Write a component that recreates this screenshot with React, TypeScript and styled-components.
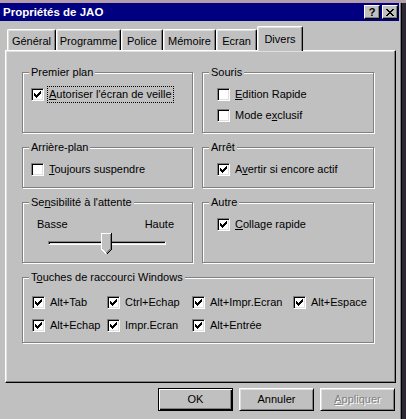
import React from "react";
import styled, { createGlobalStyle } from "styled-components";

const Global = createGlobalStyle`
  html, body { margin: 0; padding: 0; }
  body {
    width: 406px;
    height: 419px;
    overflow: hidden;
    background: linear-gradient(#b49ea9 0, #b49ea9 3px, #2e2535 3px);
    font-family: "Liberation Sans", Arial, sans-serif;
    font-size: 11px;
    color: #000;
  }
`;

const Window = styled.div`
  margin-top: 3px;
  width: 402px;
  height: 420px;
  box-sizing: border-box;
  background: #c0c0c0;
  border-right: 1px solid #000;
  box-shadow: inset -1px 0 #808080;
  padding-right: 2px;
  display: flex;
  flex-direction: column;
`;

const TitleBar = styled.div`
  height: 18px;
  background: #000080;
  color: #fff;
  display: flex;
  align-items: center;
  padding: 0 1px 0 3px;
  gap: 2px;
`;

const TitleText = styled.div`
  flex: 1;
  font-weight: bold;
  font-size: 11.5px;
  line-height: 14px;
`;

const CaptionButton = styled.div`
  width: 16px;
  height: 14px;
  box-sizing: border-box;
  background: #c0c0c0;
  border-top: 1px solid #fff;
  border-left: 1px solid #fff;
  border-right: 1px solid #000;
  border-bottom: 1px solid #000;
  box-shadow: inset -1px -1px #808080;
  display: flex;
  align-items: center;
  justify-content: center;
  color: #000;
  font-weight: bold;
  font-size: 11px;
  line-height: 11px;
`;

const Body = styled.div`
  padding: 5px 3px 0 5px;
  display: flex;
  flex-direction: column;
`;

const TabStrip = styled.div`
  height: 24px;
  display: flex;
  align-items: flex-end;
  padding-left: 2px;
`;

const Tab = styled.div<{ $w: number; $active?: boolean }>`
  box-sizing: border-box;
  width: ${(p) => p.$w}px;
  height: ${(p) => (p.$active ? 25 : 21)}px;
  margin-bottom: ${(p) => (p.$active ? -1 : 0)}px;
  position: relative;
  z-index: ${(p) => (p.$active ? 2 : 0)};
  background: #c0c0c0;
  border-top: 1px solid #fff;
  border-left: 1px solid #fff;
  border-right: 1px solid #000;
  border-radius: 2px 2px 0 0;
  box-shadow: inset -1px 0 #808080, inset 1px 1px #dfdfdf;
  text-align: center;
  padding-top: ${(p) => (p.$active ? 6 : 5)}px;
  line-height: 13px;
`;

const Panel = styled.div`
  position: relative;
  z-index: 1;
  box-sizing: border-box;
  height: 333px;
  border-top: 1px solid #fff;
  border-left: 1px solid #fff;
  border-right: 1px solid #000;
  border-bottom: 1px solid #000;
  box-shadow: inset -1px -1px #808080, inset 1px 1px #dfdfdf;
  padding: 21px 21px 0 16px;
  display: grid;
  grid-template-columns: 171px 172px;
  column-gap: 9px;
  row-gap: 14px;
  align-content: start;
`;

const GroupBox = styled.div<{ $h: number; $indent: number; $span?: boolean }>`
  position: relative;
  box-sizing: border-box;
  height: ${(p) => p.$h}px;
  grid-column: ${(p) => (p.$span ? "1 / span 2" : "auto")};
  border: 1px solid #808080;
  box-shadow: inset 1px 1px #fff, 1px 1px #fff;
  padding: 11px 0 0 ${(p) => p.$indent}px;
  display: flex;
  flex-direction: column;
`;

const GroupTitle = styled.div`
  position: absolute;
  top: -7px;
  left: 6px;
  padding: 0 2px;
  background: #c0c0c0;
  line-height: 13px;
  white-space: nowrap;
`;

const CheckRow = styled.div`
  height: 21px;
  display: flex;
  align-items: center;
  gap: 3px;
  white-space: nowrap;
`;

const Box = styled.span`
  width: 13px;
  height: 13px;
  box-sizing: border-box;
  flex: none;
  background: #fff;
  border-top: 1px solid #808080;
  border-left: 1px solid #808080;
  border-right: 1px solid #fff;
  border-bottom: 1px solid #fff;
  box-shadow: inset 1px 1px #000, inset -1px -1px #dfdfdf;
  display: flex;
  align-items: center;
  justify-content: center;
`;

const Label = styled.span<{ $focus?: boolean }>`
  padding: 1px 1px;
  line-height: 13px;
  border: 1px dotted ${(p) => (p.$focus ? "#000" : "transparent")};
`;

const TouchGrid = styled.div`
  margin-top: 2px;
  display: grid;
  grid-template-columns: 75px 85px 101px auto;
  grid-auto-rows: 23px;
  align-items: center;
`;

const SliderLabels = styled.div`
  display: flex;
  justify-content: space-between;
  line-height: 13px;
  padding: 4px 18px 0 0;
`;

const Slider = styled.div`
  position: relative;
  width: 118px;
  height: 22px;
  margin: 2px 0 0 11px;
`;

const Track = styled.div`
  position: absolute;
  left: 0;
  right: 0;
  top: 8px;
  height: 4px;
  box-sizing: border-box;
  border-top: 1px solid #808080;
  border-left: 1px solid #808080;
  border-right: 1px solid #fff;
  border-bottom: 1px solid #fff;
  background: #dfdfdf;
  box-shadow: inset 1px 1px #000;
`;

const Thumb = styled.div`
  position: absolute;
  top: 0;
  width: 11px;
  height: 22px;
`;

const ButtonRow = styled.div`
  margin-top: 5px;
  display: flex;
  justify-content: flex-end;
  gap: 6px;
  padding-right: 1px;
`;

const Button = styled.div<{ $default?: boolean; $disabled?: boolean }>`
  width: 75px;
  height: 23px;
  box-sizing: border-box;
  background: #c0c0c0;
  display: flex;
  align-items: center;
  justify-content: center;
  line-height: 13px;
  border-style: solid;
  border-width: 1px;
  border-color: ${(p) => (p.$default ? "#000" : "#fff #000 #000 #fff")};
  box-shadow: ${(p) =>
    p.$default
      ? "inset 1px 1px #fff, inset -1px -1px #000, inset -2px -2px #808080"
      : "inset 1px 1px #dfdfdf, inset -1px -1px #808080"};
  color: ${(p) => (p.$disabled ? "#808080" : "#000")};
  text-shadow: ${(p) => (p.$disabled ? "1px 1px 0 #fff" : "none")};
`;

const CHECK = [
  "......#",
  ".....##",
  "#...###",
  "##.###.",
  "#####..",
  ".###...",
  "..#....",
];

const CLOSE = [
  "##....##",
  ".##..##.",
  "..####..",
  "...##...",
  "..####..",
  ".##..##.",
  "##....##",
];

const PixelGlyph: React.FC<{ rows: string[] }> = ({ rows }) => (
  <svg width={rows[0].length} height={rows.length} shapeRendering="crispEdges">
    {rows.map((r, y) =>
      r.split("").map((c, x) =>
        c === "#" ? <rect key={`${x}-${y}`} x={x} y={y} width={1} height={1} fill="#000" /> : null
      )
    )}
  </svg>
);

const Checkbox: React.FC<{ checked?: boolean; focus?: boolean; children: React.ReactNode }> = ({
  checked,
  focus,
  children,
}) => (
  <CheckRow>
    <Box>{checked && <PixelGlyph rows={CHECK} />}</Box>
    <Label $focus={focus}>{children}</Label>
  </CheckRow>
);

const ThumbShape = () => (
  <svg width="11" height="22" shapeRendering="crispEdges">
    <polygon points="0,0 11,0 11,16 5.5,21.5 0,16" fill="#c0c0c0" />
    <polyline points="0.5,16 0.5,0.5 10,0.5" fill="none" stroke="#fff" />
    <polyline points="0.5,16 5,20.5" fill="none" stroke="#fff" />
    <polyline points="10.5,0 10.5,16.5 5.5,21.5" fill="none" stroke="#000" />
    <polyline points="9.5,1 9.5,16 5.5,20" fill="none" stroke="#808080" />
  </svg>
);

const tabs = [
  { label: "Général", w: 49 },
  { label: "Programme", w: 65 },
  { label: "Police", w: 42 },
  { label: "Mémoire", w: 53 },
  { label: "Ecran", w: 41 },
  { label: "Divers", w: 46, active: true },
];

const sliderValue = 5;
const sliderMax = 10;

export default function App() {
  const thumbLeft = Math.floor((sliderValue / sliderMax) * (118 - 11));
  return (
    <>
      <Global />
      <Window>
        <TitleBar>
          <TitleText>Propriétés de JAO</TitleText>
          <CaptionButton>?</CaptionButton>
          <CaptionButton>
            <PixelGlyph rows={CLOSE} />
          </CaptionButton>
        </TitleBar>
        <Body>
          <TabStrip>
            {tabs.map((t) => (
              <Tab key={t.label} $w={t.w} $active={t.active}>
                {t.label}
              </Tab>
            ))}
          </TabStrip>
          <Panel>
            <GroupBox $h={61} $indent={8}>
              <GroupTitle>Premier plan</GroupTitle>
              <Checkbox checked focus>
                <u>A</u>utoriser l'écran de veille
              </Checkbox>
            </GroupBox>
            <GroupBox $h={61} $indent={14}>
              <GroupTitle>Souris</GroupTitle>
              <Checkbox>
                <u>E</u>dition Rapide
              </Checkbox>
              <Checkbox>
                Mode e<u>x</u>clusif
              </Checkbox>
            </GroupBox>
            <GroupBox $h={41} $indent={8}>
              <GroupTitle>Arrière-plan</GroupTitle>
              <Checkbox>
                <u>T</u>oujours suspendre
              </Checkbox>
            </GroupBox>
            <GroupBox $h={41} $indent={14}>
              <GroupTitle>Arrêt</GroupTitle>
              <Checkbox checked>
                A<u>v</u>ertir si encore actif
              </Checkbox>
            </GroupBox>
            <GroupBox $h={61} $indent={14}>
              <GroupTitle>
                Se<u>n</u>sibilité à l'attente
              </GroupTitle>
              <SliderLabels>
                <span>Basse</span>
                <span>Haute</span>
              </SliderLabels>
              <Slider>
                <Track />
                <Thumb style={{ left: thumbLeft }}>
                  <ThumbShape />
                </Thumb>
              </Slider>
            </GroupBox>
            <GroupBox $h={61} $indent={14}>
              <GroupTitle>Autre</GroupTitle>
              <Checkbox checked>
                <u>C</u>ollage rapide
              </Checkbox>
            </GroupBox>
            <GroupBox $h={66} $indent={9} $span>
              <GroupTitle>
                T<u>o</u>uches de raccourci Windows
              </GroupTitle>
              <TouchGrid>
                <Checkbox checked>Alt+Tab</Checkbox>
                <Checkbox checked>Ctrl+Echap</Checkbox>
                <Checkbox checked>Alt+Impr.Ecran</Checkbox>
                <Checkbox checked>Alt+Espace</Checkbox>
                <Checkbox checked>Alt+Echap</Checkbox>
                <Checkbox checked>Impr.Ecran</Checkbox>
                <Checkbox checked>Alt+Entrée</Checkbox>
              </TouchGrid>
            </GroupBox>
          </Panel>
          <ButtonRow>
            <Button $default>OK</Button>
            <Button>Annuler</Button>
            <Button $disabled>
              <span>
                <u>A</u>ppliquer
              </span>
            </Button>
          </ButtonRow>
        </Body>
      </Window>
    </>
  );
}
